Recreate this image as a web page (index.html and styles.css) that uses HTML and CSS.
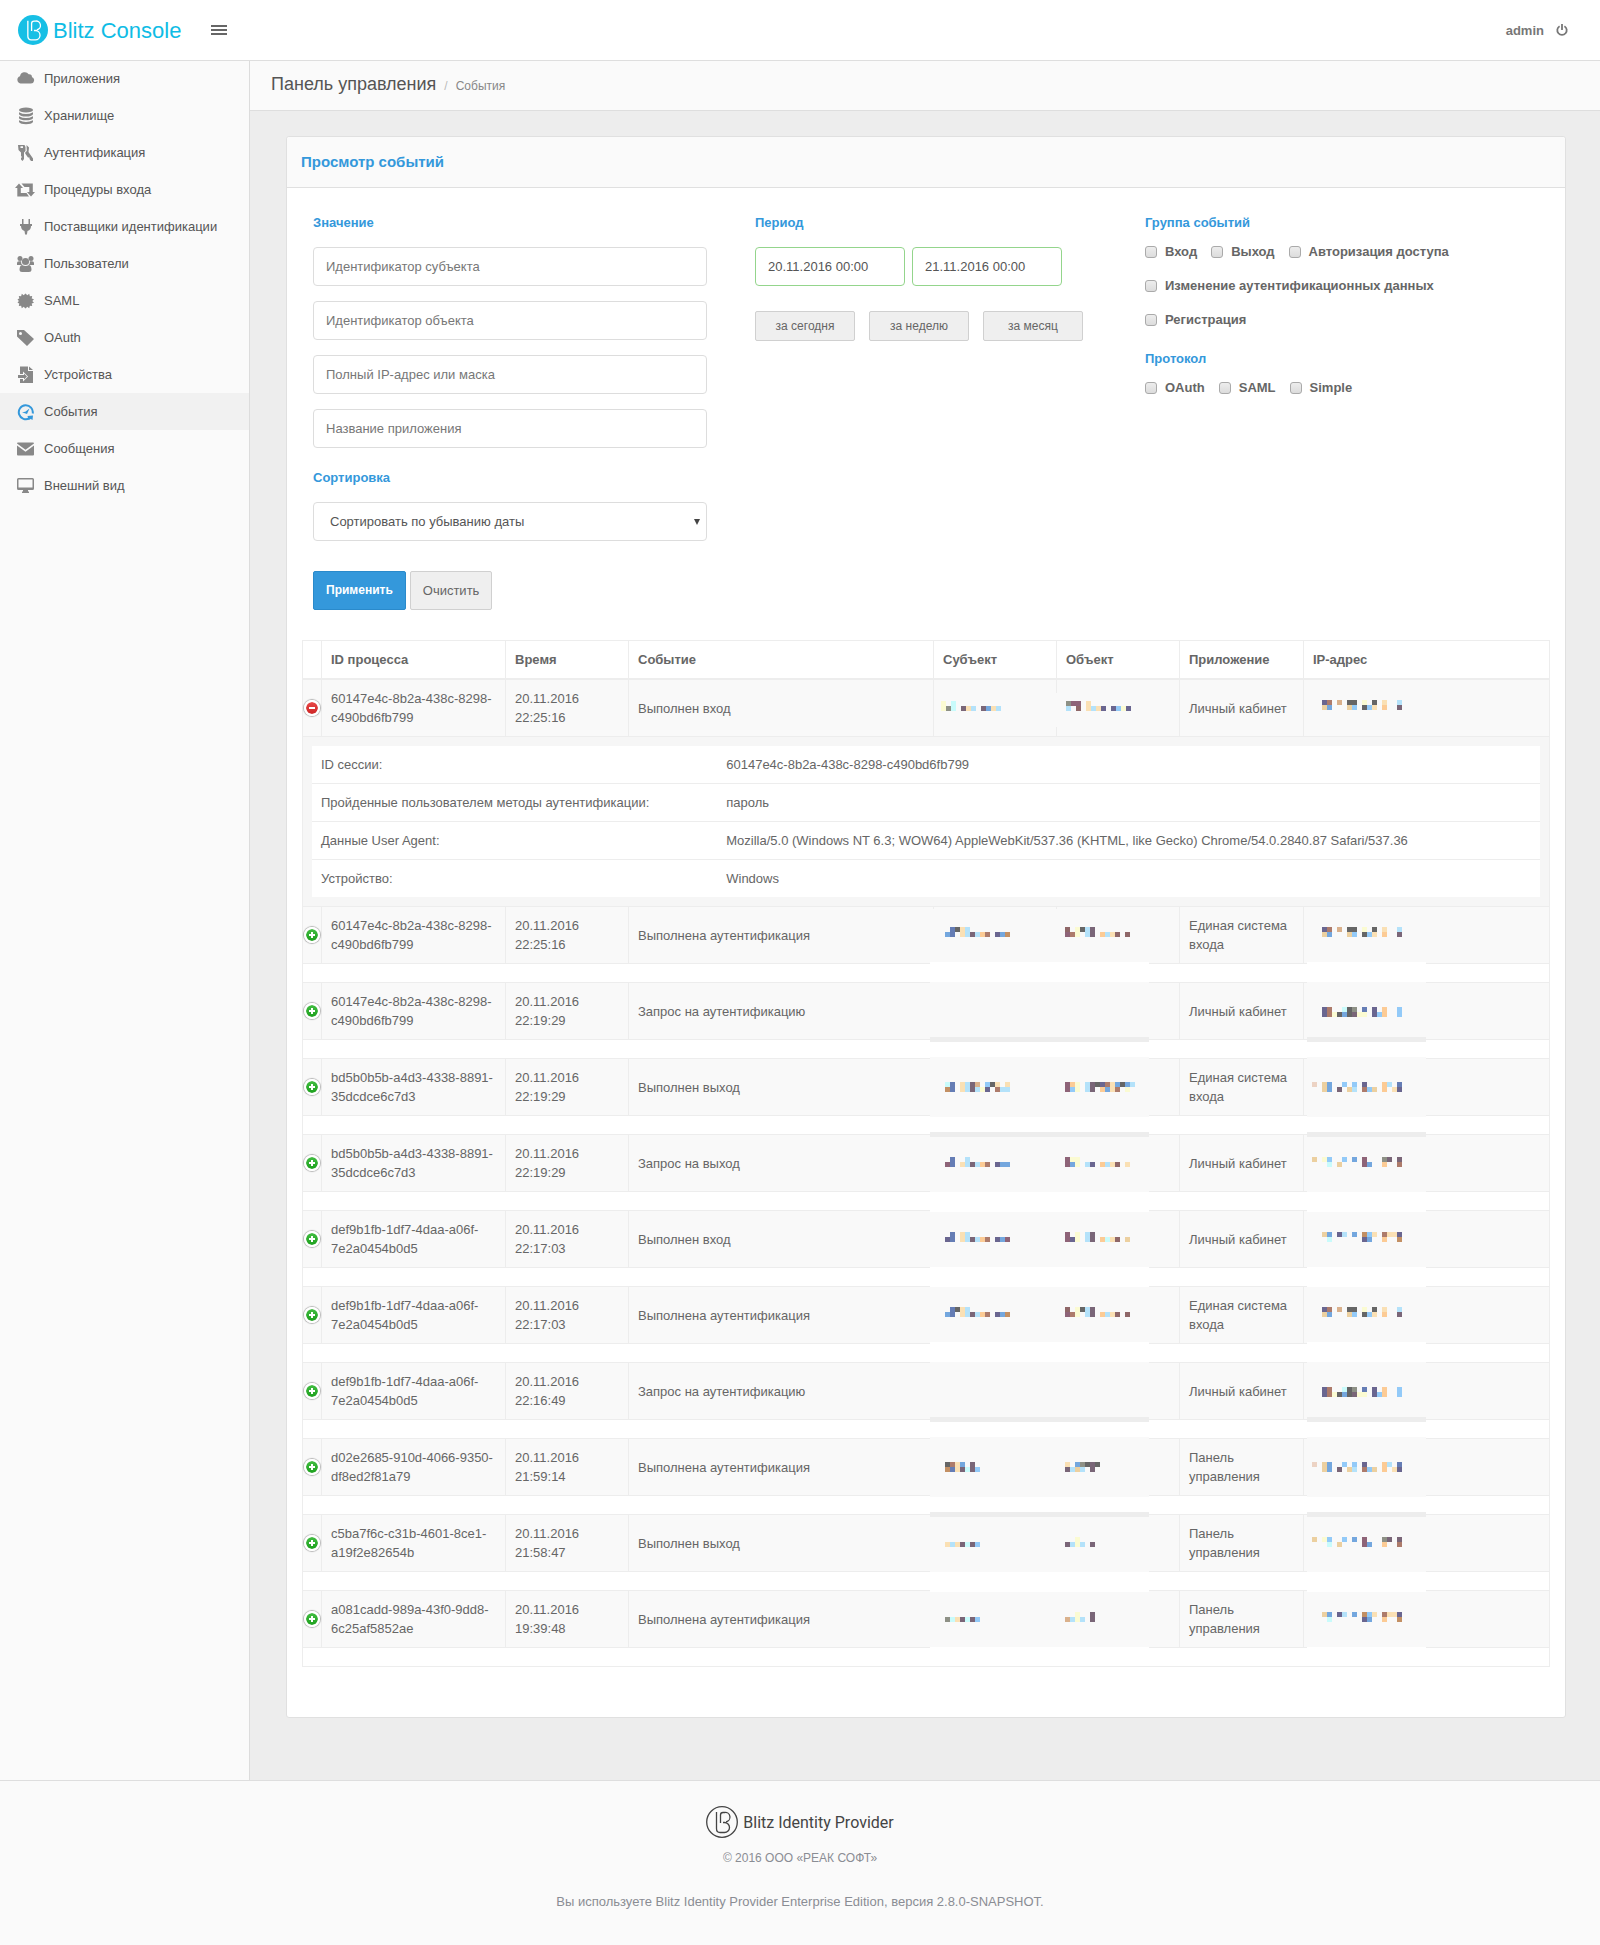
FILE: index.html
```html
<!DOCTYPE html>
<html lang="ru">
<head>
	<meta charset="utf-8" />
	<title>Blitz Console</title>
	<link rel="stylesheet" href="styles.css">
</head>
<body>
	<header class="topbar">
		<a class="brand" href="#">
			<svg class="brand-logo" viewBox="0 0 32 32">
				<circle cx="16" cy="16" r="16" fill="#17bfe5"/>
				<path d="M10.500 6V22.500Q10.500 26.500 14 26.500H18.500A4.800 4.800 0 0 0 18.500 16.500H17M14.500 17V9Q14.500 6.500 17 6.500H18.500A4.600 4.600 0 0 1 20 15.800" fill="none" stroke="#fff" stroke-width="1.400"/>
			</svg>
			<span>Blitz Console</span>
		</a>
		<button class="menu-toggle" type="button" aria-label="Меню">
			<svg width="16" height="10" viewBox="0 0 16 10"><path d="M0 0h16v2H0zM0 4h16v2H0zM0 8h16v2H0z"/></svg>
		</button>
		<div class="user">
			<a href="#">admin</a>
			<a href="#" aria-label="Выход">
				<svg width="12" height="12" viewBox="0 0 12 12"><path d="M3.600 2.200A4.700 4.700 0 1 0 8.400 2.200M6 0V6" fill="none" stroke="currentColor" stroke-width="1.800"/></svg>
			</a>
		</div>
	</header>

	<div class="wrapper">
		<nav class="sidebar">
			<a href="#"><svg viewBox="0 0 20 18"><path d="M5.500 13.500A3.700 3.700 0 0 1 5 6.300A4.800 4.800 0 0 1 13.700 4.300A3 3 0 0 1 17 7.300A3.200 3.200 0 0 1 15.800 13.500Z"/></svg>Приложения</a>
			<a href="#"><svg viewBox="0 0 20 18"><ellipse cx="11" cy="3" rx="7" ry="2.600"/><path d="M4 5.200Q11 9 18 5.200V7.200Q16.500 9.500 11 9.500T4 7.200zM4 9.200Q11 13 18 9.200V11.200Q16.500 13.300 11 13.300T4 11.200zM4 13.200Q11 16.800 18 13.200V15Q16.500 17.200 11 17.200T4 15z"/></svg>Хранилище</a>
			<a href="#"><svg viewBox="0 0 20 18"><path fill-rule="evenodd" d="M3 1H9.500L10.500 3V7L9 8.500V15L7.500 17L6 15.500V14L7 13L6 12V8.500L3.500 6zM5.500 2.200V4H8V2.200z"/><path d="M11.500 1L14 3.500L13.500 8L18 14.500V17H16L14.500 15V13.500H13L10.200 9.500V8.500L11.800 7z"/></svg>Аутентификация</a>
			<a href="#"><svg viewBox="0 0 20 18"><path d="M4 2.500L8 7H5.800V12H11.500L14 15.500H2.300V7H0zM6.500 2.500H17.800V11H20L16 15.500L12 11H14.300V6H9.500z"/></svg>Процедуры входа</a>
			<a href="#"><svg viewBox="0 0 20 18"><path d="M7 1H8.500V6H7zM13.500 1H15V6H13.500zM5 6H17V8H16Q16 12 12.500 13L12 16L11 17L10 16L9.500 13Q6 12 6 8H5z"/></svg>Поставщики идентификации</a>
			<a href="#"><svg viewBox="0 0 20 18"><circle cx="5" cy="3.500" r="2.500"/><circle cx="16" cy="3.500" r="2.500"/><circle cx="10.500" cy="6.500" r="3.600"/><path d="M2 10V8Q2 6.300 4 6.300H6Q6 9.500 7.500 10zM19 10V8Q19 6.300 17 6.300H15Q15 9.500 13.500 10zM4.500 15Q4.500 10.500 7 10Q10.500 12 14 10Q16.500 10.500 16.500 15Q16.500 17 14 17H7Q4.500 17 4.500 15z"/></svg>Пользователи</a>
			<a href="#"><svg viewBox="0 0 20 18"><path d="M10.500 1.500L12.300 3.300L14.200 1.800L14.900 4.200L17.200 4L16.700 6.400L19 7.200L17.300 9L19 10.800L16.700 11.600L17.200 14L14.900 13.800L14.200 16.200L12.300 14.700L10.500 16.500L8.700 14.700L6.800 16.200L6.100 13.800L3.800 14L4.300 11.600L2.500 10.800L3.800 9L2.500 7.200L4.300 6.400L3.800 4L6.100 4.200L6.800 1.800L8.700 3.300z"/></svg>SAML</a>
			<a href="#"><svg viewBox="0 0 20 18"><path fill-rule="evenodd" d="M2 1H9L19 10L12 17L2 7.500zM4 4.500A1.500 1.500 0 1 0 7 4.500A1.500 1.500 0 1 0 4 4.500z"/></svg>OAuth</a>
			<a href="#"><svg viewBox="0 0 20 18"><path d="M5 .500H13V5H18V17H5V13H8V15.500L13 10.500L8 5.500V8H5zM14 .500L18 4H14z"/><path d="M3 9H9V7.500L12 10.500L9 13.500V12H3z"/></svg>Устройства</a>
			<a class="active" href="#"><svg viewBox="0 0 20 18"><path d="M14.500 15.200A7 7 0 1 1 17.700 10.500" fill="none" stroke="currentColor" stroke-width="2"/><path d="M12.500 13L18 12.500L17.500 17L15.800 16L13.500 17zM14.500 5.500L12 11L7 9.200L10.300 8.700z"/></svg>События</a>
			<a href="#"><svg viewBox="0 0 20 18"><path d="M2 3.500Q2 2.500 3 2.500H18Q19 2.500 19 3.500L10.500 9.800zM2 5.500L10.500 11.800L19 5.500V14.500Q19 15.500 18 15.500H3Q2 15.500 2 14.500z"/></svg>Сообщения</a>
			<a href="#"><svg viewBox="0 0 20 18"><path fill-rule="evenodd" d="M3.500 1H17.500Q19 1 19 2.500V11.500Q19 13 17.500 13H13V14.500H14V16H7V14.500H8V13H3.500Q2 13 2 11.500V2.500Q2 1 3.500 1zM3.500 2.500V10.500H17.500V2.500z"/></svg>Внешний вид</a>
		</nav>

		<main class="content">
			<div class="breadcrumb">
				<a class="crumb-root" href="#">Панель управления</a>
				<span class="crumb-sep">/</span>
				<span>События</span>
			</div>

			<section class="panel">
				<h1 class="panel-title">Просмотр событий</h1>
				<div class="panel-body">
					<form class="filters">
						<div>
							<h2>Значение</h2>
							<div class="stack">
								<input class="field" type="text" placeholder="Идентификатор субъекта" aria-label="Идентификатор субъекта">
								<input class="field" type="text" placeholder="Идентификатор объекта" aria-label="Идентификатор объекта">
								<input class="field" type="text" placeholder="Полный IP-адрес или маска" aria-label="Полный IP-адрес или маска">
								<input class="field" type="text" placeholder="Название приложения" aria-label="Название приложения">
							</div>
							<h2 class="sort-title"><label for="sort">Сортировка</label></h2>
							<select class="field" id="sort">
								<option>Сортировать по убыванию даты</option>
							</select>
							<div class="actions">
								<button class="btn btn-primary" type="button">Применить</button>
								<button class="btn" type="button">Очистить</button>
							</div>
						</div>
						<div>
							<h2>Период</h2>
							<div class="dates">
								<input class="field valid" type="text" value="20.11.2016 00:00" aria-label="Начало периода">
								<input class="field valid" type="text" value="21.11.2016 00:00" aria-label="Конец периода">
							</div>
							<div class="presets">
								<button class="btn btn-small" type="button">за сегодня</button>
								<button class="btn btn-small" type="button">за неделю</button>
								<button class="btn btn-small" type="button">за месяц</button>
							</div>
						</div>
						<div class="checks">
							<h2>Группа событий</h2>
							<div class="check-list">
								<label><input type="checkbox">Вход</label>
								<label><input type="checkbox">Выход</label>
								<label><input type="checkbox">Авторизация доступа</label>
								<label class="wide"><input type="checkbox">Изменение аутентификационных данных</label>
								<label class="wide"><input type="checkbox">Регистрация</label>
							</div>
							<h2>Протокол</h2>
							<div class="check-list">
								<label><input type="checkbox">OAuth</label>
								<label><input type="checkbox">SAML</label>
								<label><input type="checkbox">Simple</label>
							</div>
						</div>
					</form>

					<table class="events">
						<colgroup>
							<col class="c-toggle"><col class="c-id"><col class="c-time"><col class="c-event"><col class="c-subj"><col class="c-obj"><col class="c-app"><col>
						</colgroup>
						<thead>
							<tr>
								<th></th>
								<th>ID процесса</th>
								<th>Время</th>
								<th>Событие</th>
								<th>Субъект</th>
								<th>Объект</th>
								<th>Приложение</th>
								<th>IP-адрес</th>
							</tr>
						</thead>
						<tbody>
							<tr>
								<td class="toggle"><button type="button" class="open" aria-label="Свернуть"></button></td>
								<td>60147e4c-8b2a-438c-8298-c490bd6fb799</td>
								<td>20.11.2016 22:25:16</td>
								<td>Выполнен вход</td>
								<td class="anchor"><svg class="mask mask-first" id="mask-first"></svg></td>
								<td></td>
								<td>Личный кабинет</td>
								<td class="anchor"><svg class="mask mask-first-ip" id="mask-first-ip"></svg></td>
							</tr>
							<tr class="details">
								<td colspan="8">
									<table class="info">
										<tr><td>ID сессии:</td><td>60147e4c-8b2a-438c-8298-c490bd6fb799</td></tr>
										<tr><td>Пройденные пользователем методы аутентификации:</td><td>пароль</td></tr>
										<tr><td>Данные User Agent:</td><td>Mozilla/5.0 (Windows NT 6.3; WOW64) AppleWebKit/537.36 (KHTML, like Gecko) Chrome/54.0.2840.87 Safari/537.36</td></tr>
										<tr><td>Устройство:</td><td>Windows</td></tr>
									</table>
								</td>
							</tr>
							<tr>
								<td class="toggle"><button type="button" aria-label="Развернуть"></button></td>
								<td>60147e4c-8b2a-438c-8298-c490bd6fb799</td>
								<td>20.11.2016 22:25:16</td>
								<td>Выполнена аутентификация</td>
								<td class="anchor"><svg class="mask mask-people" id="mask-people"></svg></td>
								<td></td>
								<td>Единая система входа</td>
								<td class="anchor"><svg class="mask mask-ip" id="mask-ip"></svg></td>
							</tr>
							<tr class="spacer"><td colspan="8"></td></tr>
							<tr>
								<td class="toggle"><button type="button" aria-label="Развернуть"></button></td>
								<td>60147e4c-8b2a-438c-8298-c490bd6fb799</td>
								<td>20.11.2016 22:19:29</td>
								<td>Запрос на аутентификацию</td>
								<td></td>
								<td></td>
								<td>Личный кабинет</td>
								<td></td>
							</tr>
							<tr class="spacer"><td colspan="8"></td></tr>
							<tr>
								<td class="toggle"><button type="button" aria-label="Развернуть"></button></td>
								<td>bd5b0b5b-a4d3-4338-8891-35dcdce6c7d3</td>
								<td>20.11.2016 22:19:29</td>
								<td>Выполнен выход</td>
								<td></td>
								<td></td>
								<td>Единая система входа</td>
								<td></td>
							</tr>
							<tr class="spacer"><td colspan="8"></td></tr>
							<tr>
								<td class="toggle"><button type="button" aria-label="Развернуть"></button></td>
								<td>bd5b0b5b-a4d3-4338-8891-35dcdce6c7d3</td>
								<td>20.11.2016 22:19:29</td>
								<td>Запрос на выход</td>
								<td></td>
								<td></td>
								<td>Личный кабинет</td>
								<td></td>
							</tr>
							<tr class="spacer"><td colspan="8"></td></tr>
							<tr>
								<td class="toggle"><button type="button" aria-label="Развернуть"></button></td>
								<td>def9b1fb-1df7-4daa-a06f-7e2a0454b0d5</td>
								<td>20.11.2016 22:17:03</td>
								<td>Выполнен вход</td>
								<td></td>
								<td></td>
								<td>Личный кабинет</td>
								<td></td>
							</tr>
							<tr class="spacer"><td colspan="8"></td></tr>
							<tr>
								<td class="toggle"><button type="button" aria-label="Развернуть"></button></td>
								<td>def9b1fb-1df7-4daa-a06f-7e2a0454b0d5</td>
								<td>20.11.2016 22:17:03</td>
								<td>Выполнена аутентификация</td>
								<td></td>
								<td></td>
								<td>Единая система входа</td>
								<td></td>
							</tr>
							<tr class="spacer"><td colspan="8"></td></tr>
							<tr>
								<td class="toggle"><button type="button" aria-label="Развернуть"></button></td>
								<td>def9b1fb-1df7-4daa-a06f-7e2a0454b0d5</td>
								<td>20.11.2016 22:16:49</td>
								<td>Запрос на аутентификацию</td>
								<td></td>
								<td></td>
								<td>Личный кабинет</td>
								<td></td>
							</tr>
							<tr class="spacer"><td colspan="8"></td></tr>
							<tr>
								<td class="toggle"><button type="button" aria-label="Развернуть"></button></td>
								<td>d02e2685-910d-4066-9350-df8ed2f81a79</td>
								<td>20.11.2016 21:59:14</td>
								<td>Выполнена аутентификация</td>
								<td></td>
								<td></td>
								<td>Панель управления</td>
								<td></td>
							</tr>
							<tr class="spacer"><td colspan="8"></td></tr>
							<tr>
								<td class="toggle"><button type="button" aria-label="Развернуть"></button></td>
								<td>c5ba7f6c-c31b-4601-8ce1-a19f2e82654b</td>
								<td>20.11.2016 21:58:47</td>
								<td>Выполнен выход</td>
								<td></td>
								<td></td>
								<td>Панель управления</td>
								<td></td>
							</tr>
							<tr class="spacer"><td colspan="8"></td></tr>
							<tr>
								<td class="toggle"><button type="button" aria-label="Развернуть"></button></td>
								<td>a081cadd-989a-43f0-9dd8-6c25af5852ae</td>
								<td>20.11.2016 19:39:48</td>
								<td>Выполнена аутентификация</td>
								<td></td>
								<td></td>
								<td>Панель управления</td>
								<td></td>
							</tr>
							<tr class="spacer"><td colspan="8"></td></tr>
						</tbody>
					</table>
				</div>
			</section>
		</main>
	</div>

	<footer class="footer">
		<div class="footer-logo">
			<svg viewBox="0 0 32 32">
				<circle cx="16" cy="16" r="15.300" fill="none" stroke="#444" stroke-width="1.300"/>
				<path d="M10.500 6V22.500Q10.500 26.500 14 26.500H18.500A4.800 4.800 0 0 0 18.500 16.500H17M14.500 17V9Q14.500 6.500 17 6.500H18.500A4.600 4.600 0 0 1 20 15.800" fill="none" stroke="#444" stroke-width="1.300"/>
			</svg>
			<span>Blitz Identity Provider</span>
		</div>
		<p class="copyright">© 2016 ООО «РЕАК СОФТ»</p>
		<p class="version">Вы используете Blitz Identity Provider Enterprise Edition, версия 2.8.0-SNAPSHOT.</p>
	</footer>

	<script src="masks.js"></script>
</body>
</html>
```
FILE: styles.css
```css
* {
	box-sizing: border-box;
}

body {
	margin: 0;
	background: #ededed;
	color: #666;
	font-family: "Liberation Sans", Arial, sans-serif;
	font-size: 13px;
	line-height: 19px;
}

a {
	color: inherit;
	text-decoration: none;
}

.topbar {
	position: relative;
	display: flex;
	align-items: center;
	height: 60px;
	padding: 0 32px 0 18px;
	background: #fff;
	box-shadow: 0 1px 0 #dedede;
}

.brand {
	display: flex;
	align-items: center;
	gap: 5px;
	color: #0fbce5;
	font-size: 22px;
}

.brand-logo {
	width: 30px;
	height: 30px;
}

.menu-toggle {
	display: flex;
	margin-left: 30px;
	padding: 0;
	border: 0;
	background: none;
	fill: #666;
}

.user {
	display: flex;
	align-items: center;
	gap: 12px;
	margin-left: auto;
	color: #777;
	font-weight: bold;
}

	.user svg {
		display: block;
	}

.wrapper {
	display: flex;
}

.sidebar {
	flex: 0 0 250px;
	border-right: 1px solid #dcdcdc;
	background: #fafafa;
	color: #555;
}

	.sidebar a {
		display: flex;
		align-items: center;
		gap: 9px;
		height: 37px;
		padding-left: 15px;
	}

	.sidebar svg {
		width: 20px;
		height: 18px;
		color: #888;
		fill: currentColor;
	}

	.sidebar .active {
		background: #f1f1f1;
	}

	.sidebar .active svg {
		color: #3498db;
	}

.content {
	flex: 1;
	min-width: 0;
}

.breadcrumb {
	display: flex;
	align-items: baseline;
	gap: 8px;
	height: 51px;
	padding: 15px 21px;
	border-bottom: 1px solid #dedede;
	background: #fafafa;
	color: #888;
	font-size: 12px;
}

.crumb-root {
	color: #555;
	font-size: 18px;
}

.crumb-sep {
	color: #bbb;
}

.panel {
	margin: 25px 34px 62px 36px;
	border: 1px solid #e0e0e0;
	border-radius: 3px;
	background: #fff;
}

.panel-title {
	margin: 0;
	padding: 15px 14px;
	border-bottom: 1px solid #e0e0e0;
	border-radius: 3px 3px 0 0;
	background: #fafafa;
	color: #3498db;
	font-size: 15px;
	line-height: 20px;
}

.panel-body {
	padding: 25px 15px 50px;
}

.filters {
	display: grid;
	grid-template-columns: 394fr 342fr 405fr;
	gap: 48px;
	margin: 0 0 30px 11px;
}

	.filters h2 {
		margin: 0 0 15px;
		color: #3498db;
		font-size: 13px;
		line-height: 19px;
	}

	.filters .sort-title {
		margin-top: 20px;
	}

	.filters .checks h2 {
		margin-bottom: 10px;
	}

.stack {
	display: grid;
	gap: 15px;
}

.field {
	display: block;
	width: 100%;
	height: 39px;
	padding: 0 12px;
	border: 1px solid #ddd;
	border-radius: 4px;
	background: #fff;
	color: #555;
	font: inherit;
}

	.field::placeholder {
		color: #777;
	}

select.field {
	appearance: none;
	padding: 0 16px;
	background: #fff url("data:image/svg+xml,%3Csvg xmlns='http://www.w3.org/2000/svg' width='6' height='6'%3E%3Cpath d='M0 0h6L3 6z' fill='%23444'/%3E%3C/svg%3E") no-repeat right 6px center;
}

.field.valid {
	width: 150px;
	border-color: #94d58c;
}

.actions {
	display: flex;
	gap: 4px;
	margin-top: 30px;
}

.btn {
	height: 39px;
	padding: 0 12px;
	border: 1px solid #d0d0d0;
	border-radius: 2px;
	background: #efefef;
	color: #666;
	font: inherit;
}

.btn-primary {
	border-color: #2a8acb;
	background: #3498db;
	color: #fff;
	font-size: 12px;
	font-weight: bold;
}

.btn-small {
	width: 100px;
	height: 30px;
	font-size: 12px;
}

.dates {
	display: flex;
	gap: 7px;
	margin-bottom: 25px;
}

.presets {
	display: flex;
	gap: 14px;
}

.check-list {
	display: flex;
	flex-wrap: wrap;
	gap: 15px 14px;
	margin-bottom: 20px;
	font-weight: bold;
}

	.check-list label {
		display: flex;
		align-items: center;
		gap: 8px;
	}

	.check-list .wide {
		width: 100%;
	}

	.check-list input {
		appearance: none;
		width: 12px;
		height: 12px;
		margin: 0;
		border: 1px solid #aaa;
		border-radius: 3px;
		background: linear-gradient(#ededed, #dcdcdc);
	}

.events {
	width: 100%;
	border-collapse: collapse;
	table-layout: fixed;
}

	.events th,
	.events td {
		padding: 9px;
		border: 1px solid #ededed;
		text-align: left;
		vertical-align: middle;
	}

	.events th {
		border-bottom-width: 2px;
	}

	.events tbody tr {
		background: #f9f9f9;
	}

	.events .spacer {
		background: #fff;
	}

	.events .spacer td {
		line-height: 0;
	}

	.events .details {
		background: #f6f6f6;
	}

.c-toggle {
	width: 19px;
}

.c-id {
	width: 184px;
}

.c-time,
.c-subj,
.c-obj {
	width: 123px;
}

.c-app {
	width: 124px;
}

.c-event {
	width: 305px;
}

.events .toggle {
	padding: 0;
}

.toggle button {
	position: relative;
	display: block;
	width: 16px;
	height: 16px;
	margin: 0 auto;
	padding: 0;
	border: 2px solid #fff;
	border-radius: 50%;
	background: linear-gradient(#42bd42, #1da01d) padding-box;
	box-shadow: 0 0 1px 1px #b5b5b5;
}

	.toggle button.open {
		background: linear-gradient(#e84848, #cd2525) padding-box;
	}

	/* plus and minus bars */
	.toggle button::before,
	.toggle button::after {
		content: "";
		position: absolute;
		top: 5px;
		left: 3px;
		width: 6px;
		height: 2px;
		background: #fff;
	}

	.toggle button::after {
		top: 3px;
		left: 5px;
		width: 2px;
		height: 6px;
	}

	.toggle button.open::after {
		display: none;
	}

.info {
	width: 100%;
	border-collapse: collapse;
	table-layout: fixed;
	background: #fff;
}

	.events .info tr {
		background: #fff;
	}

	.events .info td {
		border: 0;
	}

	.events .info tr + tr td {
		border-top: 1px solid #ededed;
	}

	.info td:first-child {
		width: 33%;
	}

/* mosaic that hides personal data */
.anchor {
	position: relative;
}

.mask {
	position: absolute;
	top: 0;
	left: -4px;
	z-index: 1;
	width: 219px;
	height: 755px;
}

.mask-first {
	top: 13px;
	height: 34px;
}

.mask-first-ip {
	top: 13px;
	left: 3px;
	width: 119px;
	height: 34px;
}

.mask-ip {
	left: 3px;
	width: 119px;
}

.footer {
	padding: 25px 0 34px;
	border-top: 1px solid #dedede;
	background: #fafafa;
	color: #8a8d94;
	text-align: center;
}

	.footer p {
		margin: 0;
	}

.footer-logo {
	display: flex;
	align-items: center;
	justify-content: center;
	gap: 5px;
	color: #444;
	font-family: Roboto, sans-serif;
	font-size: 16px;
}

	.footer-logo svg {
		width: 32px;
		height: 32px;
	}

.footer .copyright {
	margin: 11px 0 24px;
	font-size: 12px;
}
```
FILE: masks.js
```js
const colors = {
	k: '#666666', b: '#657db5', c: '#74a7de', t: '#fae0b4', l: '#b4e2fa',
	p: '#7a6678', o: '#fccb95', r: '#ad7b6b', v: '#6a6690', n: '#c39064',
	y: '#fbfbd2', w: '#c9fbfb', m: '#8e6478', M: '#8f6768', s: '#93caf8',
	e: '#ecd0a0', g: '#8e9186', d: '#dab18c', q: '#ecd3c4'
};
const cell = 5;

function rect(svg, x, y, width, height, fill) {
	const el = document.createElementNS('http://www.w3.org/2000/svg', 'rect');
	el.setAttribute('x', x);
	el.setAttribute('y', y);
	el.setAttribute('width', width);
	el.setAttribute('height', height);
	el.setAttribute('fill', fill);
	svg.appendChild(el);
}

// two lines of cells, one letter per cell
function mosaic(svg, x, y, lines) {
	lines.forEach((line, row) => {
		[...line].forEach((letter, i) => {
			if (colors[letter])
				rect(svg, x + i * cell, y + row * cell, cell, cell, colors[letter]);
		});
	});
}

// [top, height, fill] of the stripes under the mosaic
const stripes = [
	[2, 53, '#f9f9f9'], [55, 20, '#fff'], [75, 55, '#f9f9f9'], [130, 5, '#ededed'],
	[135, 15, '#fff'], [150, 60, '#f9f9f9'], [210, 15, '#fff'], [225, 5, '#ededed'],
	[230, 55, '#f9f9f9'], [285, 20, '#fff'], [305, 55, '#f9f9f9'], [360, 20, '#fff'],
	[380, 55, '#f9f9f9'], [435, 20, '#fff'], [455, 55, '#f9f9f9'], [510, 5, '#ededed'],
	[515, 15, '#fff'], [530, 60, '#f9f9f9'], [590, 15, '#fff'], [605, 5, '#ededed'],
	[610, 55, '#f9f9f9'], [665, 20, '#fff'], [685, 55, '#f9f9f9'], [740, 15, '#fff']
];

const ipA = ['..vr.d.kk.y.k.t..l', '..ec...es.kst.o..p'];
const ipB = ['..vr..wkg.b.v.o..s', '..vrykckpyy.vso..s'];
const ipC = ['q.ec..s.s.v...ol.b', '..ec.p.el.rse.o.tv'];
const ipD = ['e.ys..s.c.m...gp.p', '...w.e....mc..o..r'];
const ipE = ['..ec.vl.c.nst.rttv', '...w......vc..o..n'];

const people = [
	[20, ['.bktl', 'cb.tlplor.vcn'], ['M.yklp', 'mry.lp.oltM.M']],
	[175, ['wb.tlpd.skt.t', 'nb.tlplyv.rll'], ['moy.lpkvrtckcl', 'msy.lp.octr.y']],
	[250, ['.b..l', 'mb.tlplor.vcc'], ['myy', 'mcy.lv.oltM.t']],
	[325, ['.b.tl', 'vb.tlplor.vcm'], ['m.y.lp', 'mvy.lp.owtM.e']],
	[400, ['.bktl', 'cb.tlplor.vcn'], ['M.yklp', 'mry.lp.oltM.M']],
	[555, ['krtc.p', 'nbtpwps'], ['t.cgkpk', 'plel.p']],
	[630, ['', 'tltpwps'], ['..y', 'plyl.p']],
	[705, ['', 'gwtpwps'], ['..y..p', 'dlyl.p']]
];
const ips = [
	[20, ipA], [100, ipB], [175, ipC], [250, ipD], [325, ipE],
	[400, ipA], [480, ipB], [555, ipC], [630, ipD], [705, ipE]
];

const peopleMask = document.getElementById('mask-people');
const ipMask = document.getElementById('mask-ip');
stripes.forEach(([top, height, fill]) => {
	rect(peopleMask, 0, top, 219, height, fill);
	rect(ipMask, 0, top, 119, height, fill);
});
people.forEach(([y, subject, object]) => {
	mosaic(peopleMask, 15, y, subject);
	mosaic(peopleMask, 135, y, object);
});
ips.forEach(([y, lines]) => mosaic(ipMask, 5, y, lines));

const firstMask = document.getElementById('mask-first');
rect(firstMask, 11, 0, 208, 34, '#f9f9f9');
mosaic(firstMask, 11, 8, ['y.w', 'ygw.ptl.pctl']);
mosaic(firstMask, 136, 8, ['gmm.t', 'l.M.tltv.vsyv']);
mosaic(document.getElementById('mask-first-ip'), 5, 7, ipA);
```
